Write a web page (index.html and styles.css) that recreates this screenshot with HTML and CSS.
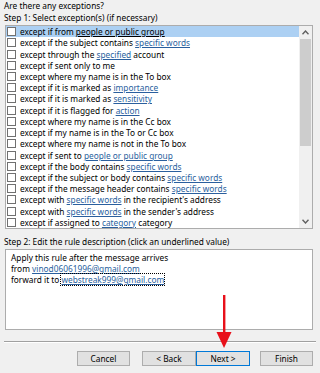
FILE: index.html
```html
<!DOCTYPE html>
<html>
<head>
<meta charset="utf-8">
<link rel="stylesheet" href="styles.css">
</head>
<body>
<div class="dialog">
  <div class="label title">Are there any exceptions?</div>
  <div class="label step1">Step 1: Select exception(s) (if necessary)</div>
  <div class="listbox">
    <div class="rows">
      <div class="row sel"><span class="cb"></span><span>except if from <u>people or public group</u></span></div>
      <div class="row"><span class="cb"></span><span>except if the subject contains <a>specific words</a></span></div>
      <div class="row"><span class="cb"></span><span>except through the <a>specified</a> account</span></div>
      <div class="row"><span class="cb"></span><span>except if sent only to me</span></div>
      <div class="row"><span class="cb"></span><span>except where my name is in the To box</span></div>
      <div class="row"><span class="cb"></span><span>except if it is marked as <a>importance</a></span></div>
      <div class="row"><span class="cb"></span><span>except if it is marked as <a>sensitivity</a></span></div>
      <div class="row"><span class="cb"></span><span>except if it is flagged for <a>action</a></span></div>
      <div class="row"><span class="cb"></span><span>except where my name is in the Cc box</span></div>
      <div class="row"><span class="cb"></span><span>except if my name is in the To or Cc box</span></div>
      <div class="row"><span class="cb"></span><span>except where my name is not in the To box</span></div>
      <div class="row"><span class="cb"></span><span>except if sent to <a>people or public group</a></span></div>
      <div class="row"><span class="cb"></span><span>except if the body contains <a>specific words</a></span></div>
      <div class="row"><span class="cb"></span><span>except if the subject or body contains <a>specific words</a></span></div>
      <div class="row"><span class="cb"></span><span>except if the message header contains <a>specific words</a></span></div>
      <div class="row"><span class="cb"></span><span>except with <a>specific words</a> in the recipient's address</span></div>
      <div class="row"><span class="cb"></span><span>except with <a>specific words</a> in the sender's address</span></div>
      <div class="row"><span class="cb"></span><span>except if assigned to <a>category</a> category</span></div>
    </div>
    <div class="scrollbar">
      <div class="arrow up"><svg width="7" height="5" viewBox="0 0 7 5"><path d="M0.5 4.2 L3.5 1 L6.5 4.2" fill="none" stroke="#606060" stroke-width="1.4"/></svg></div>
      <div class="thumb"></div>
      <div class="track"></div>
      <div class="arrow down"><svg width="7" height="5" viewBox="0 0 7 5"><path d="M0.5 0.8 L3.5 4 L6.5 0.8" fill="none" stroke="#606060" stroke-width="1.4"/></svg></div>
    </div>
  </div>
  <div class="label step2">Step 2: Edit the rule description (click an underlined value)</div>
  <div class="desc">
    <div>Apply this rule after the message arrives</div>
    <div>from <a>vinod06061996@gmail.com</a></div>
    <div>forward it to <a class="focus">webstreak999@gmail.com</a></div>
  </div>
  <div class="sep"></div>
  <div class="buttons">
    <button class="btn cancel">Cancel</button>
    <div class="pair">
      <button class="btn">&lt; Back</button>
      <button class="btn def">Next &gt;</button>
    </div>
    <button class="btn finish">Finish</button>
  </div>
  <svg class="redarrow" width="16" height="54" viewBox="0 0 16 54">
    <rect x="7" y="0" width="2.4" height="40" fill="#e8101a"/>
    <path d="M0.5 37 L15.5 37 L8 53 Z" fill="#e8101a"/>
  </svg>
</div>
</body>
</html>
```
FILE: styles.css
```css
* { box-sizing: border-box; }
html, body { margin: 0; padding: 0; }
body {
  background: #f0f0f0;
  font-family: "Noto Sans", "Open Sans", sans-serif;
  font-size: 8.3px;
  color: #000;
  width: 320px;
  height: 373px;
  overflow: hidden;
}
.dialog {
  position: relative;
  padding: 0 7px 0 5px;
}
.label {
  line-height: 12px;
  white-space: nowrap;
}
.title { margin-left: -1px; }
.step1 { margin-left: -1px; }
.listbox {
  margin-top: 1px;
  height: 204px;
  border: 1px solid #acacac;
  background: #fff;
  display: flex;
}
.rows {
  flex: 1;
  display: flex;
  flex-direction: column;
  overflow: hidden;
}
.row {
  height: 11.28px;
  display: flex;
  align-items: center;
  white-space: nowrap;
  padding-left: 1px;
}
.row.sel { background: #acd0f3; }
.cb {
  width: 9px;
  height: 9px;
  border: 1px solid #707070;
  background: #fff;
  margin-right: 4px;
  flex: none;
}
a {
  color: #2a5f9e;
  text-decoration: underline;
}
u { color: #000; }
.scrollbar {
  width: 13px;
  background: #f0f0f0;
  display: flex;
  flex-direction: column;
  flex: none;
}
.arrow {
  height: 13px;
  display: flex;
  align-items: center;
  justify-content: center;
}
.thumb {
  height: 107px;
  margin: 0 1px;
  background: #cdcdcd;
}
.track { flex: 1; }
.step2 {
  margin-top: 7px;
  margin-left: -1px;
}
.desc {
  margin-top: 1px;
  height: 81px;
  border: 1px solid #acacac;
  background: #fff;
  padding: 2px 5px;
  line-height: 11px;
  white-space: nowrap;
}
.focus {
  outline: 1px dotted #000;
  outline-offset: 0;
}
.sep {
  margin: 11px -3px 0 -1px;
  height: 2px;
  border-top: 1px solid #a0a0a0;
  border-bottom: 1px solid #fff;
}
.buttons {
  margin-top: 8px;
  display: flex;
  padding-left: 72px;
}
.btn {
  font-family: inherit;
  font-size: 8.3px;
  height: 15px;
  width: 54px;
  padding: 0;
  background: #e1e1e1;
  border: 1px solid #adadad;
  color: #000;
  line-height: 13px;
}
.pair {
  display: flex;
  margin-left: 12px;
}
.btn.def { border-color: #0078d7; }
.finish { margin-left: 10px; }
.redarrow {
  position: absolute;
  left: 216px;
  top: 295px;
}
```
